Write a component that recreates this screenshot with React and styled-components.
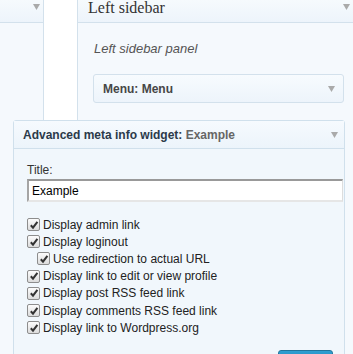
import styled, { createGlobalStyle } from "styled-components";

const GlobalStyle = createGlobalStyle`
	html, body {
		margin: 0;
		padding: 0;
		background: #f5f9fd;
		font-family: "Liberation Sans", Arial, sans-serif;
		color: #333;
		overflow: hidden;
	}
`;

const Page = styled.div`
	width: 353px;
	height: 354px;
	overflow: hidden;
`;

const Sidebars = styled.div`
	display: flex;
	height: 120px;
`;

const Column = styled.div`
	display: flex;
	flex-direction: column;
	background: #f5f9fd;
	border-left: ${(p) => (p.$side === "right" ? "1px solid #d3e1ec" : "none")};
	border-right: ${(p) => (p.$side === "left" ? "1px solid #d3e1ec" : "none")};
	width: ${(p) => (p.$side === "left" ? "43px" : "auto")};
	flex: ${(p) => (p.$side === "right" ? "1" : "none")};
`;

const Gap = styled.div`
	width: 33px;
	background: #fff;
`;

const ColumnHeader = styled.div`
	display: flex;
	align-items: flex-start;
	justify-content: space-between;
	height: 22px;
	padding: 0 3px 0 10px;
	border-bottom: 1px solid #d3e1ec;
	background: linear-gradient(#f6fafd, #edf4fb);

	& h3 {
		margin: -1px 0 0;
		font-family: "Liberation Serif", "Times New Roman", serif;
		font-weight: normal;
		font-size: 16px;
		line-height: 18px;
		color: #333;
	}
`;

const Arrow = styled.svg`
	width: 7px;
	height: 6px;
	flex: none;
	margin-top: ${(p) => p.$top || 0}px;
	fill: #aaa;
`;

const ColumnBody = styled.div`
	padding: 18px 9px 0 15px;

	& p {
		margin: 0 0 17px 1px;
		font-size: 13px;
		line-height: 16px;
		font-style: italic;
		color: #555;
	}
`;

const MiniWidget = styled.div`
	display: flex;
	align-items: center;
	justify-content: space-between;
	height: 27px;
	padding: 0 8px 0 9px;
	border: 1px solid #d3e1ec;
	border-radius: 3px;
	background: linear-gradient(#f7fbfe, #edf4fb);
	font-size: 12px;
	font-weight: bold;
	color: #464646;
`;

const Widget = styled.div`
	margin-left: 13px;
	width: 330px;
	border: 1px solid #d0e0ec;
	border-radius: 3px 3px 0 0;
	background: #f1f7fc;
`;

const WidgetHeader = styled.div`
	display: flex;
	align-items: center;
	justify-content: space-between;
	height: 27px;
	padding: 0 6px 0 9px;
	border-bottom: 1px solid #d0e0ec;
	background: linear-gradient(#f6fafe, #ecf4fb);
	font-size: 12px;
	font-weight: bold;
	color: #2b3a4a;

	& span {
		color: #666;
	}
`;

const WidgetBody = styled.div`
	padding: 13px 0 20px 13px;
`;

const Label = styled.div`
	font-size: 12px;
	line-height: 16px;
	color: #333;
`;

const TextInput = styled.div`
	box-sizing: border-box;
	width: 316px;
	height: 23px;
	margin: 1px 0 14px;
	padding: 2px 3px;
	border-style: solid;
	border-width: 2px 1px 2px 2px;
	border-color: #999 #ddd #e6e6e6 #a5a5a5;
	background: #fff;
	font-size: 12px;
	line-height: 17px;
	color: #000;
`;

const OptionList = styled.div`
	display: flex;
	flex-direction: column;
`;

const Option = styled.div`
	display: flex;
	align-items: center;
	gap: 3px;
	height: 17.2px;
	padding-left: ${(p) => (p.$indent ? 10 : 0)}px;
	font-size: 12px;
	color: #222;
`;

const Box = styled.span`
	box-sizing: border-box;
	display: flex;
	align-items: center;
	justify-content: center;
	width: 13px;
	height: 13px;
	border: 1px solid #8d8d8d;
	border-radius: 2px;
	background: linear-gradient(#fcfcfc, #dcdcdc);

	& svg {
		width: 10px;
		height: 10px;
	}
`;

const Footer = styled.div`
	display: flex;
	justify-content: flex-end;
	padding: 14px 11px 0 0;
`;

const SaveButton = styled.div`
	width: 53px;
	height: 22px;
	border: 1px solid #21759b;
	border-radius: 3px;
	background: linear-gradient(#2e9fd2, #21759b);
`;

function DownArrow({ top }) {
	return (
		<Arrow $top={top} viewBox="0 0 7 6">
			<path d="M0 0H7L3.5 6Z" />
		</Arrow>
	);
}

function Check({ label, indent }) {
	return (
		<Option $indent={indent}>
			<Box>
				<svg viewBox="0 0 10 10">
					<path
						d="M1.8 5.2L4 7.6L8.4 1.8"
						fill="none"
						stroke="#333"
						strokeWidth="2"
					/>
				</svg>
			</Box>
			{label}
		</Option>
	);
}

const options = [
	{ label: "Display admin link" },
	{ label: "Display loginout" },
	{ label: "Use redirection to actual URL", indent: true },
	{ label: "Display link to edit or view profile" },
	{ label: "Display post RSS feed link" },
	{ label: "Display comments RSS feed link" },
	{ label: "Display link to Wordpress.org" },
];

export default function App() {
	return (
		<Page>
			<GlobalStyle />
			<Sidebars>
				<Column $side="left">
					<ColumnHeader>
						<span />
						<DownArrow top={4} />
					</ColumnHeader>
				</Column>
				<Gap />
				<Column $side="right">
					<ColumnHeader>
						<h3>Left sidebar</h3>
						<DownArrow top={4} />
					</ColumnHeader>
					<ColumnBody>
						<p>Left sidebar panel</p>
						<MiniWidget>
							Menu: Menu
							<DownArrow />
						</MiniWidget>
					</ColumnBody>
				</Column>
			</Sidebars>

			<Widget>
				<WidgetHeader>
					<div>
						Advanced meta info widget: <span>Example</span>
					</div>
					<DownArrow />
				</WidgetHeader>
				<WidgetBody>
					<Label>Title:</Label>
					<TextInput>Example</TextInput>
					<OptionList>
						{options.map((o) => (
							<Check key={o.label} label={o.label} indent={o.indent} />
						))}
					</OptionList>
					<Footer>
						<SaveButton />
					</Footer>
				</WidgetBody>
			</Widget>
		</Page>
	);
}
